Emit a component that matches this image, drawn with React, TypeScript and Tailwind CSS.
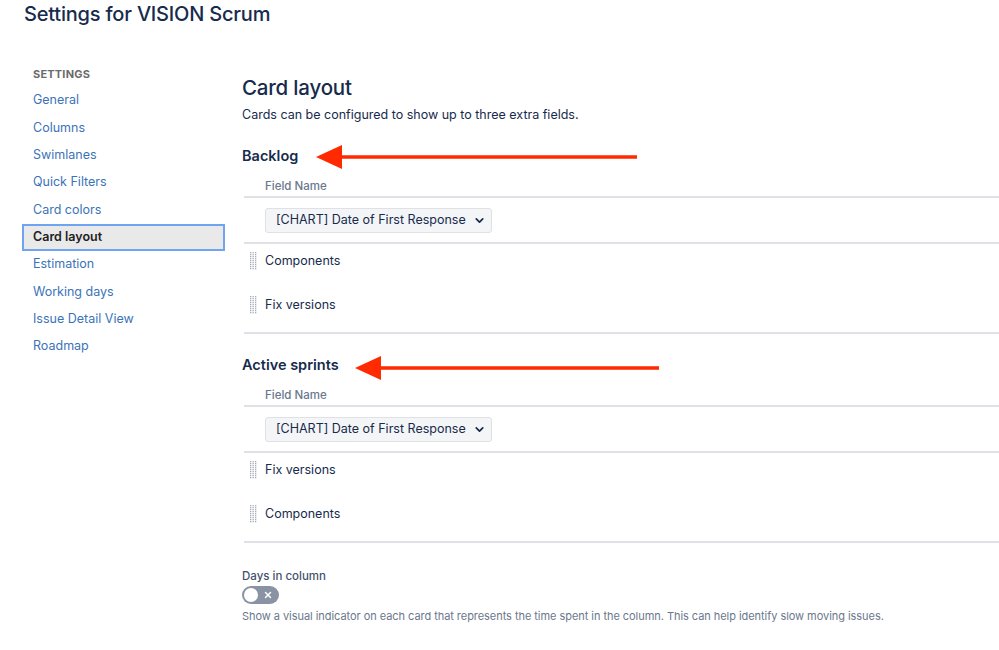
import { ChevronDown, X } from "lucide-react"

const navItems = [
  "General",
  "Columns",
  "Swimlanes",
  "Quick Filters",
  "Card colors",
  "Card layout",
  "Estimation",
  "Working days",
  "Issue Detail View",
  "Roadmap",
]

function DragHandle() {
  const dots = []
  for (let r = 0; r < 9; r++) {
    for (let c = 0; c < 3; c++) {
      dots.push(<rect key={`${r}-${c}`} x={c * 2.5} y={r * 2} width="1.3" height="1.3" fill="#a5adba" />)
    }
  }
  return (
    <svg width="7" height="18" viewBox="0 0 7 18" className="shrink-0">
      {dots}
    </svg>
  )
}

function FieldSelect() {
  return (
    <div className="flex items-center justify-between w-[227px] h-[25px] rounded-[3px] border border-[#dfe1e6] bg-[#f4f5f7] pl-[10px] pr-[5px] text-[12.5px] text-[#172b4d] whitespace-nowrap">
      <span>[CHART] Date of First Response</span>
      <ChevronDown size={13} strokeWidth={3.2} className="text-[#172b4d]" />
    </div>
  )
}

function FieldTable({ fields }: { fields: string[] }) {
  return (
    <div className="mt-[10px] border-b-2 border-[#dfe1e6]">
      <div className="h-[22px] flex items-center pl-[21px] text-[11.5px] leading-4 font-medium text-[#6b778c] border-b-2 border-[#dfe1e6]">
        Field Name
      </div>
      <div className="h-[46px] flex items-center pl-[21px] border-b-2 border-[#dfe1e6]">
        <FieldSelect />
      </div>
      {fields.map((f) => (
        <div key={f} className="h-[44px] pt-[8px] pl-[6px]">
          <div className="flex items-center gap-[8px] h-[18px] text-[12.5px] text-[#172b4d]">
            <DragHandle />
            <span>{f}</span>
          </div>
        </div>
      ))}
    </div>
  )
}

function Arrow({ width }: { width: number }) {
  return (
    <svg width={width} height="26" viewBox={`0 0 ${width} 26`}>
      <line x1="22" y1="13" x2={width} y2="13" stroke="#ff2a00" strokeWidth="3.5" />
      <polygon points="0,13 26,1 26,25" fill="#ff2a00" />
    </svg>
  )
}

export default function App() {
  return (
    <div
      className="relative w-[999px] h-[650px] overflow-hidden bg-white"
      style={{ fontFamily: "Inter, 'Noto Sans', sans-serif" }}
    >
      <h1 className="px-6 text-[20px] leading-[28px] font-medium text-[#172b4d] tracking-[-0.2px]">
        Settings for VISION Scrum
      </h1>

      <div className="flex pt-8">
        <aside className="w-[203px] ml-[22px] shrink-0 pt-px">
          <div className="pl-[11px] h-[26px] flex items-center text-[11px] font-bold tracking-[0.2px] text-[#6b6b6b]">
            SETTINGS
          </div>
          <ul>
            {navItems.map((item) =>
              item === "Card layout" ? (
                <li
                  key={item}
                  className="h-[27.33px] flex items-center pl-[9px] text-[12.5px] font-semibold text-[#222] bg-[#e9e9e9] border-2 border-[#6ea4f0]"
                >
                  {item}
                </li>
              ) : (
                <li key={item} className="h-[27.33px] flex items-center pl-[11px] text-[12.5px] text-[#3b73b9]">
                  {item}
                </li>
              )
            )}
          </ul>
        </aside>

        <main className="flex-1 ml-[17px] pt-[14px]">
          <h2 className="text-[20.5px] leading-[28px] font-medium text-[#172b4d] tracking-[-0.2px]">Card layout</h2>
          <p className="mt-[3px] text-[12.5px] leading-5 text-[#172b4d]">
            Cards can be configured to show up to three extra fields.
          </p>

          <h3 className="mt-[21px] text-[14.5px] leading-5 font-semibold text-[#172b4d]">Backlog</h3>
          <div className="ml-[2px]">
            <FieldTable fields={["Components", "Fix versions"]} />
          </div>

          <h3 className="mt-[21px] text-[14.5px] leading-5 font-semibold text-[#172b4d]">Active sprints</h3>
          <div className="ml-[2px]">
            <FieldTable fields={["Fix versions", "Components"]} />
          </div>

          <div className="mt-[25px] text-[11.5px] leading-4 font-medium text-[#42526e]">Days in column</div>
          <div className="mt-[2px] w-[37px] h-[18px] rounded-full bg-[#8993a4] flex items-center justify-between px-[2px]">
            <div className="w-[14px] h-[14px] rounded-full bg-white" />
            <X size={10} strokeWidth={3.5} className="text-white mr-[4px]" />
          </div>
          <p className="mt-[4px] text-[11px] leading-4 text-[#6b778c] tracking-[-0.05px]">
            Show a visual indicator on each card that represents the time spent in the column. This can help
            identify slow moving issues.
          </p>
        </main>
      </div>

      <div className="absolute left-[316px] top-[144px]">
        <Arrow width={321} />
      </div>
      <div className="absolute left-[355px] top-[355px]">
        <Arrow width={304} />
      </div>
    </div>
  )
}
